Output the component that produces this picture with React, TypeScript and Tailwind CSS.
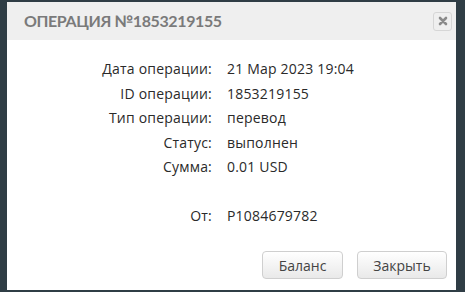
import React from "react";

const rows: [string, string][] = [
  ["Дата операции:", "21 Мар 2023 19:04"],
  ["ID операции:", "1853219155"],
  ["Тип операции:", "перевод"],
  ["Статус:", "выполнен"],
  ["Сумма:", "0.01 USD"],
  ["", ""],
  ["От:", "P1084679782"],
];

export default function App() {
  return (
    <div className="w-[465px] h-[292px] bg-[#2f3d45] pt-[2px] pl-[7px] overflow-hidden">
      <div className="w-[449px] h-[288px] bg-white flex flex-col">
        <div className="h-[38px] bg-[#efefef] flex items-center pl-[17px] pr-[4px] justify-between">
          <div
            className="text-[#7a7a7a] text-[16px] font-bold uppercase tracking-[-0.4px]"
            style={{ fontFamily: "Lato, sans-serif" }}
          >
            Операция №1853219155
          </div>
          <button className="w-[19px] h-[19px] rounded-[3px] border border-[#d6d6d6] bg-[#efefef] flex items-center justify-center">
            <svg width="10" height="10" viewBox="0 0 10 10">
              <path d="M2 2 L8 8 M8 2 L2 8" stroke="#8a8a8a" strokeWidth="2.6" strokeLinecap="round" />
            </svg>
          </button>
        </div>
        <div
          className="grid grid-cols-[205px_1fr] gap-x-[15px] pt-[17px] text-[14px] leading-[24.5px] text-[#2a2a2a] tracking-[0.2px]"
          style={{ fontFamily: "'Open Sans', sans-serif" }}
        >
          {rows.map(([l, v], i) => (
            <React.Fragment key={i}>
              <div className="text-right h-[24.5px]">{l}</div>
              <div className="h-[24.5px]">{v}</div>
            </React.Fragment>
          ))}
        </div>
        <div className="flex-1" />
        <div className="flex justify-end gap-[14px] pr-[9px] pb-[11px]">
          <button
            className="w-[81px] h-[28px] rounded-[4px] border border-[#cfcfcf] bg-gradient-to-b from-white to-[#e9e9e9] text-[14px] text-[#444]"
            style={{ fontFamily: "'Open Sans', sans-serif" }}
          >
            Баланс
          </button>
          <button
            className="w-[90px] h-[28px] rounded-[4px] border border-[#cfcfcf] bg-gradient-to-b from-white to-[#e9e9e9] text-[14px] text-[#444]"
            style={{ fontFamily: "'Open Sans', sans-serif" }}
          >
            Закрыть
          </button>
        </div>
      </div>
    </div>
  );
}
